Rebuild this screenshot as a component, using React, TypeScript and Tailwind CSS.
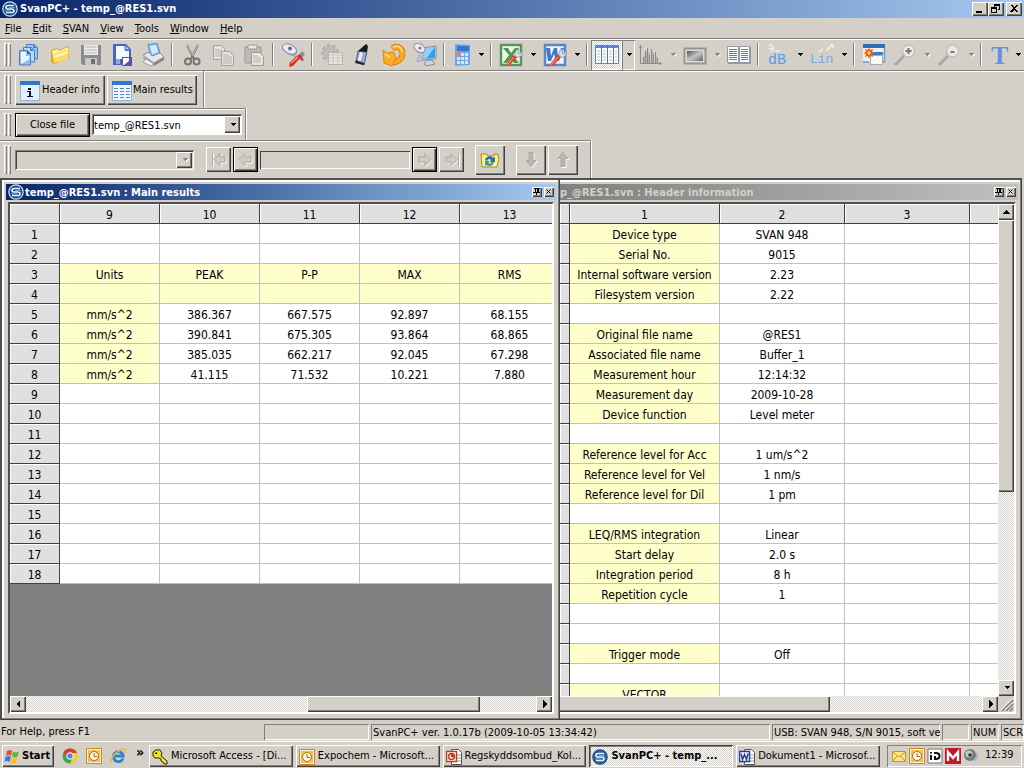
import type { ReactNode } from "react";
import clsx from "clsx";

const raised = "bg-[#d4d0c8] shadow-[inset_1px_1px_#fff,inset_-1px_-1px_#404040,inset_-2px_-2px_#808080]";
const sunken = "shadow-[inset_1px_1px_#808080,inset_-1px_-1px_#fff]";
const hatch = "bg-[repeating-conic-gradient(#fff_0_25%,#d4d0c8_0_50%)] bg-[length:2px_2px]";

/* ---------- icons ---------- */

function Icon({ children, size = "size-6" }: { children: ReactNode; size?: string }) {
  return (
    <svg viewBox="0 0 24 24" className={clsx("block shrink-0 overflow-visible", size)} aria-hidden="true">
      {children}
    </svg>
  );
}

const DocsIcon = () => (
  <Icon>
    <g stroke="#4a7fc0">
      <path d="M9.500 1.500h8l3 3V16h-11z" fill="#9cc6ef" />
      <path d="M6.500 4.500h8l3 3V19h-11z" fill="#b9daf6" />
      <path d="M2.500 7.500h8l3 3V22h-11z" fill="#8fbdec" />
    </g>
    <path d="M4 9h5v4h3.500v3L4 21z" fill="#eaf5ff" />
    <path d="M10 7.500V11h4z" fill="#2f66ad" />
    <path d="M13 4.500V8h4zM16 1.500V5h4z" fill="#4a7fc0" />
  </Icon>
);

const FolderIcon = () => (
  <Icon>
    <path d="M3 7l6-2 2 2 9-4 1 1v11L6 21l-3-2z" fill="#d9a928" />
    <path d="M4 8l5-2 2 2 9-4v10L6 19z" fill="#fff2a0" />
    <path d="M6 11l15-5-1 10-14 4z" fill="#fbdc5c" />
    <path d="M7 12l13-4v2L7 15z" fill="#fff6bd" />
  </Icon>
);

const SaveIcon = () => (
  <Icon>
    <path d="M2 2h20v20H4l-2-2z" fill="#8b8b8b" />
    <path d="M5 2h14v10H5z" fill="#ebebe8" />
    <path d="M6 4h12M6 7h12M6 10h12" stroke="#b5b5b5" />
    <path d="M6 15h12v7H6z" fill="#c8c8c8" />
    <path d="M12 16h4v5h-4z" fill="#707070" />
  </Icon>
);

const FileSaveIcon = () => (
  <Icon>
    <path d="M3 1h13l5 5v16H3z" fill="#4a63c0" />
    <path d="M6 3h9v5h4v8H6z" fill="#f4f9ff" />
    <path d="M15 1.500V7h5.500z" fill="#a9c8ef" stroke="#4a63c0" />
    <path d="M12 14h10v9H12z" fill="#5b4fb4" />
    <path d="M13 15h6v3l-5 4h-1z" fill="#fff" />
    <path d="M6 16h4v5H6z" fill="#8fa4de" />
  </Icon>
);

const PrinterIcon = () => (
  <Icon>
    <path d="M7 1.500l9-1 3 10-9 3z" fill="#8cc6f6" stroke="#4e86c6" />
    <path d="M9 3l6-1 2 7-6 2z" fill="#d2ebff" />
    <path d="M2 12l6-3 3 4 8-3 4 4-10 6z" fill="#e8e8ec" stroke="#8a8a94" />
    <path d="M2 12l11 8v3L2 16z" fill="#b2b2ba" />
    <path d="M13 20l10-6v3l-10 6z" fill="#85858f" />
    <path d="M5 16l-3 3 8 4 3-2z" fill="#f5f5f7" stroke="#999" />
  </Icon>
);

const CutIcon = () => (
  <Icon>
    <path d="M7 2l7 14M18 2l-7 14" stroke="#777" strokeWidth="2" />
    <path d="M7 2l6 11M18 2l-5 10" stroke="#ddd" strokeWidth=".7" />
    <circle cx="8" cy="18.500" r="3" fill="none" stroke="#757575" strokeWidth="2" />
    <circle cx="16.500" cy="18.500" r="3" fill="none" stroke="#757575" strokeWidth="2" />
  </Icon>
);

const CopyIcon = () => (
  <Icon>
    <g fill="#e4e3df" stroke="#a2a09b">
      <path d="M2.500 2.500h8l3 3v11h-11z" />
      <path d="M10.500 8.500h8l4 4v10h-12z" />
    </g>
    <path d="M4 7h7M4 9h6M4 11h6M4 13h6M12 12h6M12 14h9M12 16h9M12 18h9M12 20h9" stroke="#b5b3ae" />
  </Icon>
);

const PasteIcon = () => (
  <Icon>
    <path d="M3 4h16v16H3z" fill="#bdbbb6" stroke="#9b9994" />
    <path d="M6 2h9v4H6z" fill="#e9e8e4" stroke="#9b9994" />
    <path d="M9.500 9.500h8l4 4v9h-12z" fill="#e9e8e4" stroke="#9b9994" />
    <path d="M11 13h5M11 15h8M11 17h8M11 19h8" stroke="#b5b3ae" />
  </Icon>
);

const DishToolIcon = () => (
  <Icon>
    <path d="M12 11l4 4 5-7 3 3-4 5-5 1z" fill="#8a90a0" />
    <path d="M2 3c4-3 12 0 14 7-3 5-11 3-14-7z" fill="#8e95aa" />
    <ellipse cx="8.500" cy="6" rx="7.500" ry="4.500" transform="rotate(25 8.500 6)" fill="#e8eaf4" stroke="#8088a4" />
    <circle cx="9" cy="5.500" r="2" fill="#5f688c" />
    <path d="M9 19l8-7 2 3-7 8-4 1z" fill="#e02a20" />
    <path d="M10 20l7-6" stroke="#ff9c8e" strokeWidth="1.500" />
    <path d="M16 13l3-2 4 6-2 1z" fill="#c4402c" />
  </Icon>
);

const GearIcon = () => (
  <Icon>
    <circle cx="10" cy="10" r="7" fill="#bdbbb6" stroke="#b0aea9" strokeWidth="4" strokeDasharray="3 2" />
    <circle cx="10" cy="10" r="7" fill="#bdbbb6" />
    <path d="M8.500 9.500h14v12h-14z" fill="#eae9e5" stroke="#b5b3ae" />
    <path d="M9 12h13M9 15h13M9 18h13M13 10v11M18 10v11" stroke="#c5c3be" />
  </Icon>
);

const MarkerIcon = () => (
  <Icon>
    <path d="M7 8l9 1-3 13-8-3z" fill="#9aa7d6" stroke="#525a7c" />
    <path d="M9 9l3 1-3 11-3-1z" fill="#e6ebfb" />
    <path d="M7 8l8-7 2 2-1 6z" fill="#15151c" />
    <path d="M5 17l8 3v2l-9-2z" fill="#25252e" />
  </Icon>
);

const UndoIcon = () => (
  <Icon>
    <path d="M10 5.500C16 1.500 21 6 20.500 11c-.5 6-6 8.500-11 8.500" fill="none" stroke="#d97c08" strokeWidth="6" />
    <path d="M10 5.500C16 1.500 21 6 20.500 11c-.5 6-6 8.500-11 8.500" fill="none" stroke="#fda51f" strokeWidth="4.500" />
    <path d="M1 7l4 3 6-1 3 5-4 9-8-3z" fill="#ffae22" stroke="#dd850d" />
    <path d="M11 4c6-2 9 1 9 5M3 11l5 3" fill="none" stroke="#ffe08a" strokeWidth="1.500" />
  </Icon>
);

const MonitorIcon = () => (
  <Icon>
    <path d="M10 5l13-2v13l-13 1z" fill="#dbe5f0" stroke="#7f8da0" />
    <path d="M11 6l11-2v11l-11 1z" fill="#2f9df4" />
    <path d="M11 6l11-2-8 11-3 1z" fill="#8fd0ff" />
    <path d="M14 17h5l3 4-9 2-2-2z" fill="#ced4dd" stroke="#858d99" />
    <path d="M1 3C5-1 12 3 12 9 8 13 2 10 1 3z" fill="#a9aebd" />
    <ellipse cx="6.500" cy="5" rx="6" ry="4" transform="rotate(30 6.500 5)" fill="#ececf2" stroke="#9297a4" />
    <circle cx="7" cy="5" r="1.500" fill="#727889" />
    <path d="M6 12l4 5-6 2z" fill="#c3c7d0" stroke="#9297a4" strokeWidth=".7" />
  </Icon>
);

const CalcIcon = () => (
  <Icon>
    <path d="M6 1l15 1v20l-15 1z" fill="#6fa6e4" />
    <path d="M8 3h12v5H8z" fill="#2f78d0" />
    <path d="M12 10h3v3h-3zM16 10h3v3h-3zM8 14h3v3H8zM12 14h3v3h-3zM16 14h3v3h-3zM8 18h3v3H8zM12 18h3v3h-3zM16 18h3v3h-3z" fill="#cfe8ff" />
    <circle cx="9.500" cy="11" r="2.500" fill="#e08a5a" />
  </Icon>
);

const WrenchMark = () => (
  <g>
    <path d="M16 12c0-4 2-6 4-6l-1 4 2 1 2-3c1 4-1 6-4 6l-2 1z" fill="#d6dfe8" stroke="#8092a5" strokeWidth=".7" />
    <path d="M14 12l4 2-7 8-5 1z" fill="#e5402f" />
    <path d="M15 14l-7 8" stroke="#ffac9a" />
  </g>
);

const ExcelIcon = () => (
  <Icon>
    <path d="M2 2h20v20H2z" fill="#eef6ea" stroke="#5c9460" strokeWidth="2.500" />
    <path d="M4 5h5l3 5 4-5h4l-6 7 6 8h-5l-3-5-4 5H4l6-8z" fill="#4c9a50" />
    <WrenchMark />
  </Icon>
);

const WordIcon = () => (
  <Icon>
    <path d="M2 2h20v20H2z" fill="#eef4fc" stroke="#5a86c6" strokeWidth="2.500" />
    <path d="M3 5h4l1 8 3-8h3l1 8 3-8h3l-5 13h-3l-2-7-3 7H5z" fill="#4276c4" />
    <WrenchMark />
  </Icon>
);

const TableIcon = () => (
  <svg viewBox="0 0 24 20" className="h-5 w-6" aria-hidden="true">
    <path d="M.5.5h23v18H.5z" fill="#fff" stroke="#5a83e0" />
    <path d="M0 0h24v3H0z" fill="#5c86e6" />
    <path d="M6.500 0v19M12.500 0v19M18.500 0v19" stroke="#4773d6" />
    <path d="M2 6h3M8 6h3M14 6h3M20 6h2M2 9h3M8 9h3M14 9h3M20 9h2M2 12h3M8 12h3M14 12h3M20 12h2M2 15h3M8 15h3M14 15h3M20 15h2" stroke="#a9bbdf" />
  </svg>
);

const ChartIcon = () => (
  <Icon>
    <path d="M1.500 2v18.500H23M0 4h3M21 19v3" stroke="#8c8a86" fill="none" />
    <path d="M4.500 20v-6M6.500 20V8M8.500 20V5M10.500 20v-8M12.500 20V6M14.500 20v-9M16.500 20V9M18.500 20v-5" stroke="#8c8a86" />
    <path d="M5.500 20v-7M7.500 20V9M9.500 20V9M13.500 20V9M17.500 20v-7" stroke="#b5b3ae" />
  </Icon>
);

const PhotoIcon = () => (
  <Icon>
    <defs>
      <linearGradient id="photo" x1="0" y1="0" x2="1" y2="1">
        <stop offset="0" stopColor="#555" />
        <stop offset=".5" stopColor="#c5c5c5" />
        <stop offset="1" stopColor="#666" />
      </linearGradient>
    </defs>
    <path d="M1.500 5.500h21v15h-21z" fill="#dedcd7" stroke="#97958f" strokeWidth="2" />
    <path d="M4 8h16v10H4z" fill="url(#photo)" />
  </Icon>
);

const BookIcon = () => (
  <Icon>
    <path d="M1 4h23v17H1z" fill="#9a9a94" />
    <path d="M.5 3.500h11v16H.5zM12.500 3.500h10v16h-10z" fill="#fff" stroke="#8f9aa8" />
    <path d="M2 6.500h8M2 8.500h8M2 10.500h8M2 12.500h8M2 14.500h8M2 16.500h8M14 6.500h7M14 8.500h7M14 10.500h7M14 12.500h7M14 14.500h7M14 16.500h7" stroke="#3a8ad8" />
  </Icon>
);

const DbIcon = () => (
  <Icon>
    <path d="M3 3c2-2 4-1 4 1s-3 2-4 1M4 8c3 0 4-2 3-3M9 8h5" stroke="#eee" fill="none" strokeWidth="1.500" />
    <text x="2" y="21" fontFamily="Liberation Mono" fontSize="15" fill="#5b9be6">dB</text>
  </Icon>
);

const LinIcon = () => (
  <Icon>
    <path d="M9 9l4-3M16 8l5-5M20 2h3v3" stroke="#eeeae2" fill="none" strokeWidth="2" />
    <text x="0" y="20" fontFamily="Liberation Mono" fontSize="13" fill="#74a9e6">Lin</text>
  </Icon>
);

const NewWindowIcon = () => (
  <Icon>
    <path d="M1 2h21v17H1z" fill="#eef0f0" />
    <path d="M1 1h22v4H1z" fill="#2d70b5" />
    <path d="M22.500 5v14H21M1 19h6" stroke="#6e9ac8" fill="none" strokeWidth="1.500" />
    <path d="M8 9h13v3H8z" fill="#3a7fc6" />
    <path d="M8.500 12.500h12v9h-12z" fill="#fcfbf2" stroke="#aab" />
    <path d="M7 4l1 3 3-1-1 3 3 1-3 1 1 3-3-1-1 3-1-3-3 1 1-3-3-1 3-1-1-3 3 1z" fill="#f15a13" />
    <circle cx="7" cy="10" r="1.800" fill="#ffd83c" />
  </Icon>
);

const ZoomIcon = ({ plus }: { plus?: boolean }) => (
  <Icon>
    <path d="M11 13l-9 9" stroke="#a9a7a2" strokeWidth="3" />
    <circle cx="15.500" cy="8" r="6" fill="#eceae6" stroke="#c2c0bb" strokeWidth="1.500" />
    <path d={plus ? "M12.500 8h6M15.500 5v6" : "M13.500 9h4"} stroke="#777" strokeWidth="2" />
  </Icon>
);

const LetterIcon = () => (
  <Icon>
    <text x="5" y="21" fontFamily="Liberation Serif" fontWeight="bold" fontSize="26" fill="#5f94e4">T</text>
  </Icon>
);

function SvanLogo({ size = "size-4", dark = false }: { size?: string; dark?: boolean }) {
  return (
    <svg viewBox="0 0 16 16" className={clsx("block shrink-0", size)} aria-hidden="true">
      <circle cx="8" cy="8" r="7.200" fill={dark ? "#2d5f9e" : "#1d4f86"} stroke={dark ? "#1f4c86" : "#cde6f4"} strokeWidth="1.200" />
      <path d="M12 4.500H6.500Q4 4.500 4 6.300T6.500 8h3Q12 8 12 9.800t-2.500 1.700H4" fill="none" stroke="#e2f3fb" strokeWidth="1.700" />
      <path d="M13 6.500H7M3 9.800h6" stroke="#7fb6d9" strokeWidth=".8" />
    </svg>
  );
}

const HeaderInfoIcon = () => (
  <svg viewBox="0 0 20 20" className="size-5 shrink-0" aria-hidden="true">
    <path d="M0 0h20v20H0z" fill="#8fb7de" />
    <path d="M1 4h18v15H1z" fill="#e3f1fc" />
    <path d="M0 0h20v4H0z" fill="#2c79cf" />
    <path d="M8 7h3v2H8zM7 10h4v5h2v1H7v-1h2v-4H7z" fill="#111" />
  </svg>
);

const MainResultsIcon = () => (
  <svg viewBox="0 0 20 20" className="size-5 shrink-0" aria-hidden="true">
    <path d="M0 0h20v20H0z" fill="#8fb7de" />
    <path d="M1 4h18v15H1z" fill="#eef6fd" />
    <path d="M0 0h20v4H0z" fill="#2c79cf" />
    <path d="M2 7.500h4M8 7.500h4M14 7.500h4M2 10.500h4M8 10.500h4M14 10.500h4M2 13.500h4M8 13.500h4M14 13.500h4M2 16.500h4M8 16.500h4M14 16.500h4" stroke="#5a87b5" />
  </svg>
);

const arrowPaths = {
  first: "M2.500 2v13M4 8.500l6-6V6h5v5h-5v3.500z",
  prev: "M2 8.500l6-6V6h6v5H8v3.500z",
  next: "M15 8.500l-6-6V6H3v5h6v3.500z",
  last: "M15.500 2v13M14 8.500l-6-6V6H3v5h5v3.500z",
  down: "M7 1.500h4v8h3l-5 6-5-6h3z",
  up: "M7 15.500h4v-8h3l-5-6-5 6h3z",
};

function ArrowGlyph({ kind }: { kind: keyof typeof arrowPaths }) {
  const vertical = kind === "down" || kind === "up";
  return (
    <svg viewBox="0 0 18 18" className="size-[18px]" aria-hidden="true">
      <path d={arrowPaths[kind]} transform="translate(1 1)" fill="none" stroke="#fff" />
      <path d={arrowPaths[kind]} fill={vertical ? "#b9b7b3" : "#cfccc4"} stroke="#aaa8a3" />
    </svg>
  );
}

const RefreshFolderIcon = () => (
  <svg viewBox="0 0 20 18" className="h-[18px] w-5" aria-hidden="true">
    <path d="M1 3h6l1 2h6V3h4v3l1 1-2 9H2z" fill="#fff08c" stroke="#a68b1e" />
    <path d="M5 9c1-4 6-5 8-2l2-1v5h-5l1-2c-2-2-3-1-4 1z" fill="#2b6cb2" />
    <path d="M14 11c-1 4-5 5-8 3l-1 1v-5h5l-2 2c2 1 3 0 4-1z" fill="#2b9ac2" />
  </svg>
);

function Caret({ dir = "down", dim }: { dir?: "down" | "up" | "left" | "right"; dim?: boolean }) {
  const paths = {
    down: "M2 2h6L5 5z",
    up: "M1 6h7L4.500 2z",
    left: "M6 0v8L2 4z",
    right: "M3 0v8l4-4z",
  };
  return (
    <svg viewBox="0 0 9 8" className="block h-2 w-[9px] shrink-0" aria-hidden="true" shapeRendering="crispEdges">
      {dim && <path d={paths[dir]} fill="#fff" transform="translate(1 1)" />}
      <path d={paths[dir]} fill={dim ? "#8a8884" : "#000"} />
    </svg>
  );
}

/* ---------- toolbars ---------- */

const Grip = () => (
  <div className="flex w-[13px] shrink-0 items-center gap-px self-stretch py-1 pl-1">
    <div className="h-full w-[3px] shadow-[inset_1px_1px_#fff,inset_-1px_-1px_#808080]" />
    <div className="h-full w-[3px] shadow-[inset_1px_1px_#fff,inset_-1px_-1px_#808080]" />
  </div>
);

const Separator = () => (
  <div className="flex w-2 shrink-0 justify-center self-stretch py-1">
    <div className="w-0.5 border-l border-r border-l-[#808080] border-r-white" />
  </div>
);

interface ToolProps {
  label: string;
  icon: ReactNode;
  drop?: boolean;
  dim?: boolean;
  narrow?: boolean;
  pressed?: boolean;
}

function Tool({ label, icon, drop, dim, narrow, pressed }: ToolProps) {
  return (
    <>
      <button
        type="button"
        aria-label={label}
        className={clsx(
          "flex h-[30px] shrink-0 items-center justify-center",
          narrow ? "w-[26px]" : "w-[31px]",
          pressed && [hatch, sunken]
        )}
      >
        {icon}
      </button>
      {drop && (
        <button
          type="button"
          aria-label={`${label} options`}
          className={clsx("flex h-[30px] w-[13px] shrink-0 items-center justify-center", pressed && sunken)}
        >
          <Caret dim={dim} />
        </button>
      )}
    </>
  );
}

function Band({ className, children }: { className: string; children: ReactNode }) {
  return (
    <div className={clsx("flex items-center border-t border-[#808080] shadow-[inset_0_1px_#fff,1px_0_#fff]", className)}>
      {children}
    </div>
  );
}

function MainToolbar() {
  return (
    <Band className="h-8 w-full overflow-hidden">
      <Grip />
      <Tool label="New" icon={<DocsIcon />} />
      <Tool label="Open" icon={<FolderIcon />} />
      <Tool label="Save" icon={<SaveIcon />} />
      <Tool label="Save as" icon={<FileSaveIcon />} />
      <Tool label="Print" icon={<PrinterIcon />} />
      <Separator />
      <Tool label="Cut" icon={<CutIcon />} />
      <Tool label="Copy" icon={<CopyIcon />} />
      <Tool label="Paste" icon={<PasteIcon />} />
      <Separator />
      <Tool label="Settings" icon={<DishToolIcon />} />
      <Separator />
      <Tool label="Configuration" icon={<GearIcon />} />
      <Tool label="Instrument" icon={<MarkerIcon />} />
      <Tool label="Reload" icon={<UndoIcon />} />
      <Tool label="Remote" icon={<MonitorIcon />} />
      <Separator />
      <Tool label="Calculator" icon={<CalcIcon />} drop narrow />
      <Separator />
      <Tool label="Excel" icon={<ExcelIcon />} drop />
      <Tool label="Word" icon={<WordIcon />} drop />
      <Separator />
      <Tool label="Table" icon={<TableIcon />} drop pressed />
      <Tool label="Chart" icon={<ChartIcon />} drop dim />
      <Tool label="Picture" icon={<PhotoIcon />} drop dim />
      <Tool label="Book" icon={<BookIcon />} />
      <Separator />
      <Tool label="Decibels" icon={<DbIcon />} drop />
      <Tool label="Linear" icon={<LinIcon />} drop />
      <Separator />
      <Tool label="New view" icon={<NewWindowIcon />} />
      <Tool label="Zoom in" icon={<ZoomIcon plus />} drop dim />
      <Tool label="Zoom out" icon={<ZoomIcon />} drop dim />
      <Separator />
      <Tool label="Text" icon={<LetterIcon />} drop narrow />
    </Band>
  );
}

function FileBands() {
  const combo = "h-full min-w-0 flex-1 appearance-none bg-transparent pt-0.5 text-[11px] outline-none";
  const comboFrame = "p-0.5 shadow-[inset_1px_1px_#808080,inset_-1px_-1px_#fff,inset_2px_2px_#404040]";
  return (
    <>
      <Band className="h-[38px] w-full">
        <div className="flex h-full w-[204px] items-center gap-0.5 border-r border-[#808080] shadow-[1px_0_#fff]">
          <Grip />
          <button type="button" className={clsx("flex h-[30px] w-[90px] items-center gap-0.5 pt-0.5 pl-[5px]", raised)}>
            <HeaderInfoIcon />
            Header info
          </button>
          <button type="button" className={clsx("flex h-[30px] w-[90px] items-center gap-px pt-0.5 pl-[5px]", raised)}>
            <MainResultsIcon />
            Main results
          </button>
        </div>
      </Band>
      <Band className="h-8 w-[246px] border-r">
        <Grip />
        <button type="button" className={clsx("ml-0.5 h-6 w-[75px] border border-black pt-0.5", raised)}>
          Close file
        </button>
        <div className={clsx("ml-0.5 flex h-[21px] w-[150px] bg-white", comboFrame)}>
          <select aria-label="Open file" className={combo}>
            <option>temp_@RES1.svn</option>
          </select>
          <span className={clsx("flex w-4 shrink-0 items-center justify-center", raised)}>
            <Caret />
          </span>
        </div>
      </Band>
      <Band className="h-[38px] w-[591px] border-r">
        <Grip />
        <div className={clsx("ml-0.5 flex h-5 w-[179px]", comboFrame)}>
          <select aria-label="Record" disabled className={combo} />
          <span className={clsx("flex w-4 shrink-0 items-center justify-center", raised)}>
            <Caret dim />
          </span>
        </div>
        <div className="ml-3 flex items-center gap-0.5">
          <NavButton label="First" kind="first" />
          <NavButton label="Previous" kind="prev" framed />
          <input
            type="text"
            aria-label="Position"
            className="h-[18px] w-[150px] shadow-[inset_1px_1px_#404040,inset_-1px_-1px_#fff] outline-none"
          />
          <NavButton label="Next" kind="next" framed />
          <NavButton label="Last" kind="last" />
        </div>
        <button
          type="button"
          aria-label="Refresh folder"
          className={clsx("ml-[11px] flex h-[30px] w-[30px] items-center justify-center", raised)}
        >
          <RefreshFolderIcon />
        </button>
        <div className="ml-[11px] flex gap-0.5">
          {(["down", "up"] as const).map((kind) => (
            <button
              key={kind}
              type="button"
              aria-label={kind}
              className={clsx("flex h-[30px] w-[30px] items-center justify-center", raised)}
            >
              <ArrowGlyph kind={kind} />
            </button>
          ))}
        </div>
      </Band>
    </>
  );
}

function NavButton({ label, kind, framed }: { label: string; kind: keyof typeof arrowPaths; framed?: boolean }) {
  return (
    <button
      type="button"
      aria-label={label}
      className={clsx("flex h-[25px] w-[25px] items-center justify-center", raised, framed && "border border-black")}
    >
      <ArrowGlyph kind={kind} />
    </button>
  );
}

/* ---------- document windows ---------- */

const mainColumns = ["9", "10", "11", "12", "13"];

const mainRows: Record<number, string[]> = {
  3: ["Units", "PEAK", "P-P", "MAX", "RMS"],
  5: ["mm/s^2", "386.367", "667.575", "92.897", "68.155"],
  6: ["mm/s^2", "390.841", "675.305", "93.864", "68.865"],
  7: ["mm/s^2", "385.035", "662.217", "92.045", "67.298"],
  8: ["mm/s^2", "41.115", "71.532", "10.221", "7.880"],
};

const headerRows: [string, string][] = [
  ["Device type", "SVAN 948"],
  ["Serial No.", "9015"],
  ["Internal software version", "2.23"],
  ["Filesystem version", "2.22"],
  ["", ""],
  ["Original file name", "@RES1"],
  ["Associated file name", "Buffer_1"],
  ["Measurement hour", "12:14:32"],
  ["Measurement day", "2009-10-28"],
  ["Device function", "Level meter"],
  ["", ""],
  ["Reference level for Acc", "1 um/s^2"],
  ["Reference level for Vel", "1 nm/s"],
  ["Reference level for Dil", "1 pm"],
  ["", ""],
  ["LEQ/RMS integration", "Linear"],
  ["Start delay", "2.0 s"],
  ["Integration period", "8 h"],
  ["Repetition cycle", "1"],
  ["", ""],
  ["", ""],
  ["Trigger mode", "Off"],
  ["", ""],
  ["VECTOR", ""],
];

const headCell =
  "h-5 border-b border-r border-[#404040] bg-[#e0e0e0] p-0 pt-0.5 text-center font-normal shadow-[inset_1px_1px_#fff]";
const cell = "h-5 border-b border-r border-[#c0c0c0] p-0 pt-0.5 text-center whitespace-nowrap";
const yellow = "bg-[#ffffcc]";

function MainGrid() {
  return (
    <table className="w-[550px] table-fixed border-separate border-spacing-0 bg-white text-xs leading-4">
      <colgroup>
        <col className="w-[50px]" />
        {mainColumns.map((c) => (
          <col key={c} className="w-[100px]" />
        ))}
      </colgroup>
      <thead>
        <tr>
          <th className={headCell} />
          {mainColumns.map((c) => (
            <th key={c} className={headCell}>{c}</th>
          ))}
        </tr>
      </thead>
      <tbody>
        {Array.from({ length: 18 }, (_, i) => i + 1).map((n) => (
          <tr key={n}>
            <th className={headCell}>{n}</th>
            {mainColumns.map((c, j) => (
              <td
                key={c}
                className={clsx(cell, (n === 3 || n === 4 || (j === 0 && n >= 5 && n <= 8)) && yellow)}
              >
                {mainRows[n]?.[j]}
              </td>
            ))}
          </tr>
        ))}
      </tbody>
    </table>
  );
}

function HeaderGrid() {
  return (
    <table className="w-[510px] table-fixed border-separate border-spacing-0 bg-white text-xs leading-4">
      <colgroup>
        <col className="w-[10px]" />
        <col className="w-[150px]" />
        <col className="w-[125px]" />
        <col className="w-[125px]" />
        <col className="w-[100px]" />
      </colgroup>
      <thead>
        <tr>
          <th className={headCell} />
          <th className={headCell}>1</th>
          <th className={headCell}>2</th>
          <th className={headCell}>3</th>
          <th className={headCell} />
        </tr>
      </thead>
      <tbody>
        {headerRows.map(([name, value], i) => (
          <tr key={i}>
            <th className={headCell} />
            <td className={clsx(cell, name && yellow)}>{name}</td>
            <td className={cell}>{value}</td>
            <td className={cell} />
            <td className={cell} />
          </tr>
        ))}
      </tbody>
    </table>
  );
}

function ScrollButton({ dir }: { dir: "up" | "down" | "left" | "right" }) {
  return (
    <button type="button" aria-label={`Scroll ${dir}`} className={clsx("flex size-4 shrink-0 items-center justify-center", raised)}>
      <Caret dir={dir} />
    </button>
  );
}

function WindowTitle({ active, children }: { active?: boolean; children: ReactNode }) {
  return (
    <div
      className={clsx(
        "flex h-4 items-center gap-px overflow-hidden text-[11px] leading-4 font-bold whitespace-nowrap",
        active
          ? "bg-linear-to-r from-[#0a246a] to-[#a6caf0] pl-0.5 text-white"
          : "bg-linear-to-r from-[#808080] to-[#c0c0c0] text-[#d4d0c8]"
      )}
    >
      {active && <SvanLogo />}
      <h2 className="flex-1 pt-0.5">{children}</h2>
      <div className="mr-0.5 flex gap-0.5">
        <button type="button" aria-label="Pin" className={clsx("size-[10px]", raised)}>
          <svg viewBox="0 0 10 10" className="size-[10px]" shapeRendering="crispEdges" aria-hidden="true">
            <path d="M2 1h6v1H2zM3 1h1v5H3zM5 1h2v5H5zM1 5h7v1H1zM4 6h1v2H4z" fill="#000" />
          </svg>
        </button>
        <button type="button" aria-label="Close" className={clsx("size-[10px]", raised)}>
          <svg viewBox="0 0 10 10" className="size-[10px]" aria-hidden="true">
            <path d="M2.500 2.500l4 4M6.500 2.500l-4 4" stroke="#000" />
          </svg>
        </button>
      </div>
    </div>
  );
}

function Workspace() {
  return (
    <main className="mr-0.5 grid min-h-0 flex-1 grid-cols-[558fr_462fr] border-t-2 border-l-2 border-[#505050]">
      <section className="flex min-h-0 min-w-0 flex-col bg-[#d4d0c8] p-1 pb-1.5 shadow-[inset_-1px_-1px_#404040,inset_-2px_-2px_#808080,inset_2px_2px_#fff]">
        <WindowTitle active>temp_@RES1.svn : Main results</WindowTitle>
        <div className="mx-0.5 mt-0.5 flex min-h-0 flex-1 flex-col border-2 border-t-[#505050] border-r-white border-b-white border-l-[#505050]">
          <div className="min-h-0 flex-1 overflow-hidden bg-[#808080]">
            <MainGrid />
          </div>
          <div className={clsx("flex h-4 shrink-0", hatch)}>
            <ScrollButton dir="left" />
            <div className="grow-[281]" />
            <div className={clsx("grow-[173]", raised)} />
            <div className="grow-[56]" />
            <ScrollButton dir="right" />
          </div>
        </div>
      </section>
      <section className="flex min-h-0 min-w-0 flex-col bg-[#d4d0c8] pt-1 pr-1 pb-1.5 shadow-[inset_-1px_-1px_#404040,inset_-2px_-2px_#808080,inset_0_2px_#fff]">
        <WindowTitle>p_@RES1.svn : Header information</WindowTitle>
        <div className="mt-0.5 mr-0.5 flex min-h-0 flex-1 flex-col border-y-2 border-r-2 border-t-[#505050] border-r-white border-b-white">
          <div className="flex min-h-0 flex-1">
            <div className="min-w-0 flex-1 overflow-hidden bg-white">
              <HeaderGrid />
            </div>
            <div className={clsx("flex w-4 shrink-0 flex-col", hatch)}>
              <ScrollButton dir="up" />
              <div className={clsx("grow-[272]", raised)} />
              <div className="grow-[188]" />
              <ScrollButton dir="down" />
            </div>
          </div>
          <div className="flex h-4 shrink-0">
            <div className={clsx("flex flex-1", hatch)}>
              <div className="grow-[270] bg-[#d4d0c8] shadow-[inset_0_1px_#fff,inset_-1px_-1px_#404040,inset_-2px_-2px_#808080]" />
              <div className="grow-[152]" />
              <ScrollButton dir="right" />
            </div>
            <svg viewBox="0 0 16 16" className="size-4 bg-[#d4d0c8]" aria-hidden="true">
              <path d="M4 15L15 4M8 15l7-7M12 15l3-3" stroke="#808080" strokeWidth="1.500" />
              <path d="M3 14L14 3M7 14l7-7" stroke="#fff" />
            </svg>
          </div>
        </div>
      </section>
    </main>
  );
}

/* ---------- status bar and taskbar ---------- */

function StatusBar() {
  const pane = clsx("h-4 shrink-0 overflow-hidden pl-0.5 whitespace-nowrap", sunken);
  return (
    <footer className="flex h-[21px] shrink-0 items-center gap-0.5 overflow-hidden pt-0.5 leading-[17px]">
      <div className="w-[262px] shrink-0 pl-px">For Help, press F1</div>
      <div className={clsx(pane, "w-[105px]")} />
      <div className={clsx("h-4 min-w-0 flex-1 overflow-hidden pl-0.5 whitespace-nowrap", sunken)}>
        SvanPC+ ver. 1.0.17b (2009-10-05 13:34:42)
      </div>
      <div className={clsx(pane, "w-[168px]")}>USB: SVAN 948, S/N 9015, soft ve</div>
      <div className={clsx(pane, "w-[27px]")} />
      <div className={clsx(pane, "w-7")}>NUM</div>
      <div className={clsx(pane, "w-[23px]")}>SCR</div>
    </footer>
  );
}

const OutlookIcon = () => (
  <svg viewBox="0 0 16 16" className="size-4 shrink-0" aria-hidden="true">
    <path d="M.5.5h15v15H.5z" fill="#fff0c9" stroke="#c78928" />
    <path d="M2 2h12v12H2z" fill="#f1bd5e" />
    <circle cx="8" cy="8" r="4.500" fill="#fffbe9" stroke="#b36b13" />
    <path d="M8 5v3.500h3" fill="none" stroke="#a35d0d" />
  </svg>
);

const KeyIcon = () => (
  <svg viewBox="0 0 16 16" className="size-4 shrink-0" aria-hidden="true">
    <path d="M1 3l3-2h4l2 3-1 3 6 5v3h-3l-1-2-2-1v-2L7 9H3L1 7z" fill="#f4e61b" stroke="#222" />
    <path d="M3 4l2-1v2H3z" fill="#222" />
  </svg>
);

const OfficeDocIcon = ({ word }: { word?: boolean }) => (
  <svg viewBox="0 0 16 16" className="size-4 shrink-0" aria-hidden="true">
    <path d="M5.500.5h7l3 3v12h-10z" fill="#fff" stroke="#555" />
    <path d="M11 6h4M11 9h4M11 12h4" stroke="#999" />
    <path d="M.5 2.500h10v10H.5z" fill="#fff" stroke={word ? "#20409a" : "#c0401b"} strokeWidth="1.500" />
    {word ? (
      <path d="M2 4.500l1.500 6 2-5 2 5 1.500-6" fill="none" stroke="#20409a" strokeWidth="1.500" />
    ) : (
      <path d="M5.500 4.500a3 3 0 1 0 3 3h-3zM7 4v2h2" fill="none" stroke="#c0401b" strokeWidth="1.500" />
    )}
  </svg>
);

const tasks = [
  { title: "Microsoft Access - [Di...", icon: <KeyIcon /> },
  { title: "Expochem - Microsoft...", icon: <OutlookIcon /> },
  { title: "Regskyddsombud_Kol...", icon: <OfficeDocIcon /> },
  { title: "SvanPC+ - temp_...", icon: <SvanLogo dark />, active: true },
  { title: "Dokument1 - Microsof...", icon: <OfficeDocIcon word /> },
];

function Taskbar() {
  return (
    <nav className="flex h-[27px] shrink-0 items-center px-0.5 pt-0.5 shadow-[inset_0_1px_#fff]">
      <button type="button" className={clsx("flex h-[22px] w-[52px] shrink-0 items-center gap-0.5 pt-0.5 pl-0.5 font-bold", raised)}>
        <svg viewBox="0 0 16 16" className="size-4 shrink-0" aria-hidden="true">
          <path d="M3 2q3-2 5 0L7 7Q4 5 2 7z" fill="#e5532a" />
          <path d="M9 2.500q3 2 6 0l-1.500 5q-3 2-5.500 0z" fill="#5fb336" />
          <path d="M1.500 8q3-2 5.300 0l-1.300 5q-3-2-5 0z" fill="#3c77d8" />
          <path d="M7.500 8.500q3 2 6 0l-1.500 5q-3 2-5.500 0z" fill="#f5c21d" />
        </svg>
        Start
      </button>
      <div className="flex shrink-0 items-center gap-2 pl-2">
        <a href="#chrome" aria-label="Chrome">
          <svg viewBox="0 0 16 16" className="size-4" aria-hidden="true">
            <circle cx="8" cy="8" r="7.500" fill="#3fa447" />
            <path d="M1.500 4.500A7.500 7.500 0 0 1 15 5H8L5 9z" fill="#e23d2c" />
            <path d="M15 5a7.500 7.500 0 0 1-7 10.500L11 9V5z" fill="#f8cf31" />
            <circle cx="8" cy="8" r="3.300" fill="#4a8ae0" stroke="#fff" />
          </svg>
        </a>
        <a href="#outlook" aria-label="Outlook">
          <OutlookIcon />
        </a>
        <a href="#explorer" aria-label="Internet Explorer">
          <svg viewBox="0 0 16 16" className="size-4" aria-hidden="true">
            <path d="M13 10.500A5 5 0 1 1 13.300 8H4" fill="none" stroke="#2b83d6" strokeWidth="2.800" />
            <path d="M1 14.500C-1 11 9 0 15 1.500c1 .5.500 2-.5 3.500" fill="none" stroke="#f0b92a" strokeWidth="1.500" />
          </svg>
        </a>
      </div>
      <span className="w-[23px] shrink-0 pb-2 pl-2.5 text-sm leading-4 font-bold">»</span>
      <div className="flex min-w-0 flex-1 gap-[3px]">
        {tasks.map((task) => (
          <button
            key={task.title}
            type="button"
            className={clsx(
              "flex h-[22px] min-w-0 flex-1 items-center gap-[3px] overflow-hidden pt-0.5 pl-[3px] whitespace-nowrap",
              task.active
                ? [hatch, "font-bold shadow-[inset_1px_1px_#404040,inset_-1px_-1px_#fff,inset_2px_2px_#808080]"]
                : raised
            )}
          >
            {task.icon}
            {task.title}
          </button>
        ))}
      </div>
      <div className={clsx("ml-[7px] flex h-[22px] w-[135px] shrink-0 items-center gap-0.5 pl-1", sunken)}>
        <svg viewBox="0 0 16 16" className="size-4" aria-hidden="true">
          <path d="M1.500 3.500h13v10h-13z" fill="#ffe68a" stroke="#c79526" />
          <path d="M2 4l6 5 6-5M2 13l4-5M14 13l-4-5" fill="none" stroke="#c79526" />
        </svg>
        <OutlookIcon />
        <svg viewBox="0 0 16 16" className="size-4" aria-hidden="true">
          <path d="M1 1h14v14H1z" fill="#fff" stroke="#777" />
          <path d="M4 7v5M4 4v1.500M7 5h2q3.500 0 3.500 3T9 11H8V8" fill="none" stroke="#111" strokeWidth="2" />
        </svg>
        <svg viewBox="0 0 16 16" className="size-4" aria-hidden="true">
          <path d="M0 0h16v16H0z" fill="#c4162c" />
          <path d="M3 13V4l5 6 5-6v9" fill="none" stroke="#fff" strokeWidth="2.400" />
        </svg>
        <svg viewBox="0 0 16 16" className="size-4" aria-hidden="true">
          <circle cx="7" cy="7" r="6" fill="#77797f" />
          <circle cx="6" cy="6" r="3.500" fill="#c4c7ce" />
          <circle cx="7" cy="7" r="1.800" fill="#333" />
          <path d="M11 13q4-3 3-8" fill="none" stroke="#99a8d8" strokeWidth="1.500" />
        </svg>
        <time className="ml-1">12:39</time>
      </div>
    </nav>
  );
}

/* ---------- application frame ---------- */

const menus = ["File", "Edit", "SVAN", "View", "Tools", "Window", "Help"];

const captionButtons = [
  { label: "Minimize", path: "M4 9h6v2H4z" },
  { label: "Restore", path: "M6 2h6v6h-2v-1h1V4H7v1H6zM3 5h6v6H3zM4 7v3h4V7z" },
  { label: "Close", path: "M4 3h2l2 2 2-2h2L9 6l3 4h-2L8 8l-2 2H4l3-4z" },
];

export default function App() {
  return (
    <div className="flex h-screen flex-col overflow-hidden bg-[#d4d0c8] font-['DejaVu_Sans_Condensed','Noto_Sans',sans-serif] text-[11px] text-black">
      <header className="flex h-[18px] shrink-0 items-center gap-0.5 bg-linear-to-r from-[#0a246a] to-[#a6caf0] px-0.5 text-white">
        <SvanLogo />
        <h1 className="flex-1 text-[11px] leading-4 font-bold">SvanPC+ - temp_@RES1.svn</h1>
        {captionButtons.map((b, i) => (
          <button
            key={b.label}
            type="button"
            aria-label={b.label}
            className={clsx("flex h-[14px] w-4 items-center justify-center", raised, i === 1 && "-ml-0.5")}
          >
            <svg viewBox="0 0 16 14" className="h-[14px] w-4" shapeRendering="crispEdges" aria-hidden="true">
              <path d={b.path} fill="#000" fillRule="evenodd" />
            </svg>
          </button>
        ))}
      </header>
      <nav className="flex h-5 shrink-0 items-center gap-[11px] pt-0.5 pl-[5px]">
        {menus.map((m) => (
          <a key={m} href={`#${m.toLowerCase()}`}>
            <span className="underline">{m[0]}</span>
            {m.slice(1)}
          </a>
        ))}
      </nav>
      <div className="shrink-0">
        <MainToolbar />
        <FileBands />
      </div>
      <Workspace />
      <StatusBar />
      <Taskbar />
    </div>
  );
}
